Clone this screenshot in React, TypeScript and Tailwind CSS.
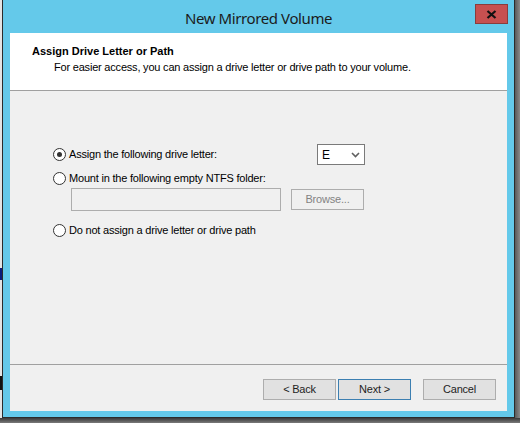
import React from "react";

const ui = { fontFamily: '"Liberation Sans", Arial, sans-serif' };

function Radio({ checked }: { checked?: boolean }) {
  return (
    <div className="w-[13px] h-[13px] rounded-full border border-[#333333] bg-white flex items-center justify-center shrink-0">
      {checked && <div className="w-[5px] h-[5px] rounded-full bg-[#333333]" />}
    </div>
  );
}

function Btn({ label, def }: { label: string; def?: boolean }) {
  return (
    <div
      className={`w-[73px] h-[21px] flex items-center justify-center bg-[#e1e1e1] border text-[11px] tracking-[-0.2px] text-[#1e1e1e] ${
        def ? "border-[#3c7fb1]" : "border-[#adadad]"
      }`}
    >
      {label}
    </div>
  );
}

export default function App() {
  return (
    <div className="w-[520px] h-[423px] flex flex-col bg-[#6a6a6a]" style={ui}>
      <div className="flex h-[418px]">
        <div className="w-[2px] bg-[#e4e4e4] flex flex-col">
          <div className="h-[268px]" />
          <div className="h-[12px] bg-[#0b1a7a]" />
          <div className="h-[96px]" />
          <div className="h-[14px] bg-[#111111]" />
        </div>
        <div className="w-[513px] border-x border-b border-[#2b2b2b] bg-[#64c9ea] flex flex-col">
          <div className="h-[33px] grid grid-cols-[1fr_auto_1fr]">
            <div />
            <div
              className="flex items-center justify-center text-[15px] tracking-[-0.4px] text-[#1b1b1b] pt-[3px]"
              style={{ fontFamily: '"Noto Sans", "Open Sans", sans-serif' }}
            >
              New Mirrored Volume
            </div>
            <div className="flex justify-end items-start pt-[4px] pr-[6px]">
              <div className="w-[33px] h-[20px] bg-[#c75050] border border-[#8a3c3c] flex items-center justify-center">
                <svg width="11" height="9" viewBox="0 0 11 9">
                  <path d="M1.5 1 L9.5 8 M9.5 1 L1.5 8" stroke="#111" strokeWidth="2.2" strokeLinecap="butt" />
                </svg>
              </div>
            </div>
          </div>
          <div className="mx-[7px] flex flex-col h-[378px]">
            <div className="h-[58px] bg-white border-b border-[#a0a0a0] flex flex-col pt-[11px] pl-[22px]">
              <div className="text-[11px] font-bold text-black leading-[14px]">Assign Drive Letter or Path</div>
              <div className="text-[11px] tracking-[-0.2px] text-black leading-[14px] mt-[2px] pl-[22px]">
                For easier access, you can assign a drive letter or drive path to your volume.
              </div>
            </div>
            <div className="h-[274px] bg-[#f0f0f0] border-b border-[#a0a0a0] flex flex-col pt-[53px] pl-[43px] text-[11px] tracking-[-0.2px] text-black">
              <div className="h-[21px] flex items-center">
                <div className="w-[264px] flex items-center gap-[3px]">
                  <Radio checked />
                  <span>Assign the following drive letter:</span>
                </div>
                <div className="w-[48px] h-[21px] bg-white border border-[#7a7a7a] flex items-center pl-[4px] pr-[4px] justify-between">
                  <span className="text-[12px]">E</span>
                  <svg width="9" height="6" viewBox="0 0 9 6">
                    <path d="M1 1 L4.5 4.5 L8 1" stroke="#606060" strokeWidth="1.6" fill="none" />
                  </svg>
                </div>
              </div>
              <div className="h-[14px] flex items-center gap-[3px] mt-[6px]">
                <Radio />
                <span>Mount in the following empty NTFS folder:</span>
              </div>
              <div className="flex items-center mt-[3px] ml-[18px] gap-[10px]">
                <div className="w-[210px] h-[23px] border border-[#adadad] bg-[#f0f0f0]" />
                <div className="w-[73px] h-[21px] border border-[#adadad] bg-[#f0f0f0] flex items-center justify-center text-[#838383]">
                  Browse...
                </div>
              </div>
              <div className="h-[14px] flex items-center gap-[3px] mt-[12px]">
                <Radio />
                <span>Do not assign a drive letter or drive path</span>
              </div>
            </div>
            <div className="flex-1 bg-[#f0f0f0] flex justify-end pt-[14px] pr-[11px]">
              <div className="flex">
                <Btn label="< Back" />
                <div className="ml-[2px]">
                  <Btn label="Next >" def />
                </div>
                <div className="ml-[12px]">
                  <Btn label="Cancel" />
                </div>
              </div>
            </div>
          </div>
        </div>
        <div className="w-[5px] bg-gradient-to-r from-[#5a5a5a] to-[#8a8a8a]" />
      </div>
      <div className="h-[5px] bg-gradient-to-b from-[#3a3a3a] to-[#7a7a7a]" />
    </div>
  );
}
